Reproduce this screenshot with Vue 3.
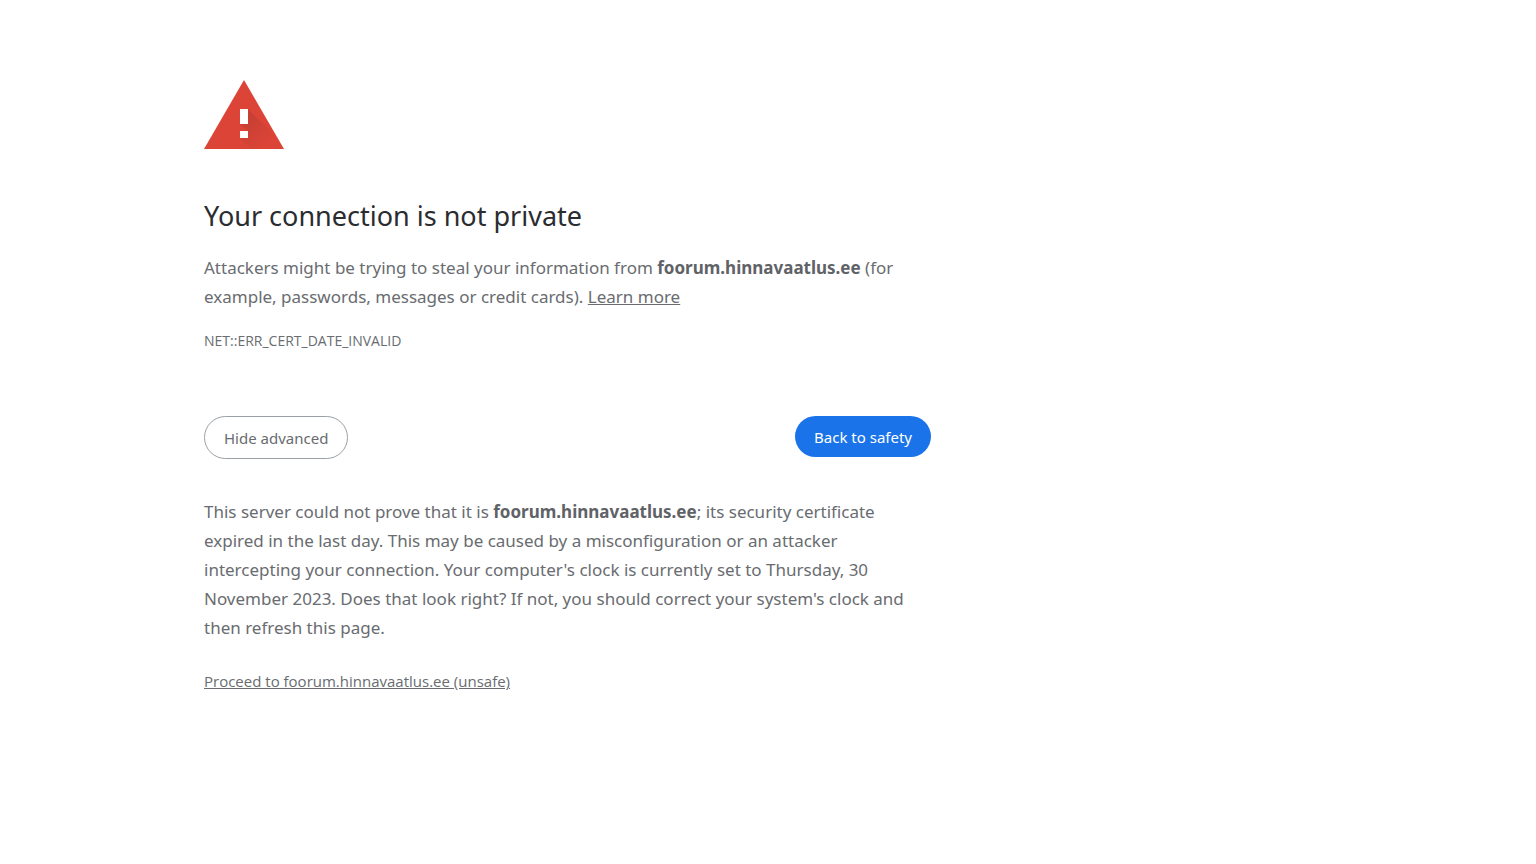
<script setup>
const host = 'foorum.hinnavaatlus.ee'
</script>

<template>
  <main class="interstitial">
    <svg class="icon" viewBox="0 0 80 69" role="img" aria-label="Warning">
      <defs>
        <linearGradient id="shade" gradientUnits="userSpaceOnUse" x1="40" y1="40" x2="62" y2="64">
          <stop offset="0" stop-color="#b23a30" stop-opacity=".5" />
          <stop offset="1" stop-color="#b23a30" stop-opacity="0" />
        </linearGradient>
      </defs>
      <path fill="#db4437" d="M40 0 80 69H0z" />
      <path fill="url(#shade)" d="M44 29 68 53 77 69H47L36 58 44 58V51L36 44H44z" />
      <path fill="#fff" d="M36 29h8v15h-8zM36 51h8v7h-8z" />
    </svg>
    <h1>Your connection is not private</h1>
    <p class="body">
      Attackers might be trying to steal your information from <strong>{{ host }}</strong> (for
      example, passwords, messages or credit cards). <a href="#">Learn more</a>
    </p>
    <p class="code">NET::ERR_CERT_DATE_INVALID</p>
    <div class="actions">
      <button type="button" class="secondary">Hide advanced</button>
      <button type="button" class="primary">Back to safety</button>
    </div>
    <p class="body">
      This server could not prove that it is <strong>{{ host }}</strong>; its security certificate
      expired in the last day. This may be caused by a misconfiguration or an attacker
      intercepting your connection. Your computer's clock is currently set to Thursday, 30
      November 2023. Does that look right? If not, you should correct your system's clock and
      then refresh this page.
    </p>
    <a class="proceed" href="#">Proceed to {{ host }} (unsafe)</a>
  </main>
</template>

<style>
body { background: #fff; }
</style>

<style scoped>
.interstitial {
  box-sizing: border-box;
  max-width: 931px;
  padding: 80px 0 40px 204px;
  color: #696c70;
  font-family: "Noto Sans", "Open Sans", sans-serif;
}
.icon { display: block; width: 80px; height: 69px; }
h1 { margin: 47px 0 17px; color: #2b2c30; font-size: 27px; font-weight: 400; line-height: 40px; }
p { margin: 0; }
.body { font-size: 17px; line-height: 29px; }
strong { color: #5f6368; }
a { color: inherit; }
.code { margin-top: 17px; font: 14px/26px "Open Sans", "Noto Sans", sans-serif; }
.actions { display: flex; justify-content: space-between; align-items: flex-start; margin: 62px 0 38px; }
button { border-radius: 22px; font: 15px/20px "Noto Sans", sans-serif; }
.secondary { padding: 11px 19px 10px; border: 1px solid #9aa0a6; background: #fff; color: #696c70; }
.primary { padding: 11px 19px 10px; border: 0; background: #1a73e8; color: #fff; }
.proceed { display: inline-block; margin-top: 27px; font: 15px/24px "Open Sans", "Noto Sans", sans-serif; }
</style>
